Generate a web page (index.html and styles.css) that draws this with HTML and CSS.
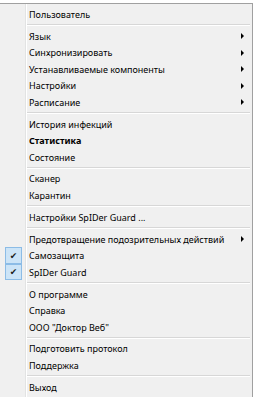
FILE: index.html
```html
<!DOCTYPE html>
<html>
  <head>
    <meta charset="utf-8">
    <meta name="viewport" content="width=device-width, initial-scale=1">
    <title>Dr.Web</title>
    <link rel="stylesheet" href="styles.css">
  </head>
  <body>
    <div class="menu">
      <div class="menu_item">Пользователь</div>
      <div class="menu_sep"></div>
      <div class="menu_item">Язык<span class="arrow"></span></div>
      <div class="menu_item">Синхронизировать<span class="arrow"></span></div>
      <div class="menu_item">Устанавливаемые компоненты<span class="arrow"></span></div>
      <div class="menu_item">Настройки<span class="arrow"></span></div>
      <div class="menu_item">Расписание<span class="arrow"></span></div>
      <div class="menu_sep"></div>
      <div class="menu_item">История инфекций</div>
      <div class="menu_item bold">Статистика</div>
      <div class="menu_item">Состояние</div>
      <div class="menu_sep"></div>
      <div class="menu_item">Сканер</div>
      <div class="menu_item">Карантин</div>
      <div class="menu_sep"></div>
      <div class="menu_item">Настройки SpIDer Guard ...</div>
      <div class="menu_sep"></div>
      <div class="menu_item">Предотвращение подозрительных действий<span class="arrow"></span></div>
      <div class="menu_item"><span class="check">&#10004;</span>Самозащита</div>
      <div class="menu_item"><span class="check">&#10004;</span>SpIDer Guard</div>
      <div class="menu_sep"></div>
      <div class="menu_item">О программе</div>
      <div class="menu_item">Справка</div>
      <div class="menu_item">ООО "Доктор Веб"</div>
      <div class="menu_sep"></div>
      <div class="menu_item">Подготовить протокол</div>
      <div class="menu_item">Поддержка</div>
      <div class="menu_sep"></div>
      <div class="menu_item">Выход</div>
    </div>
  </body>
</html>
```

FILE: styles.css
```css
html, body{
  margin: 0;
  padding: 0;
  background: #FFFFFF;
}
.menu{
  margin-top: 3px;
  width: 252px;
  padding: 2px 0 1px;
  background-color: #F0F0F0;
  background-image: linear-gradient(to right, transparent 25px, #E2E3E3 25px, #E2E3E3 26px, #FFFFFF 26px, #FFFFFF 27px, transparent 27px);
  border-top: 1px solid #A0A0A0;
  border-right: 1px solid #A0A0A0;
  font-family: "Noto Sans", "Open Sans", sans-serif;
  font-size: 9px;
  color: #000000;
}
.menu_item{
  position: relative;
  display: flex;
  align-items: center;
  height: 16.5px;
  padding-left: 29px;
  padding-right: 8px;
  white-space: nowrap;
}
.bold{
  font-weight: bold;
}
.arrow{
  margin-left: auto;
  width: 0;
  height: 0;
  border-left: 3px solid #000000;
  border-top: 3px solid transparent;
  border-bottom: 3px solid transparent;
}
.check{
  position: absolute;
  left: 5px;
  top: 0;
  width: 15px;
  height: 14.5px;
  border: 1px solid #8CBCE6;
  background: #CCE4F7;
  display: flex;
  align-items: center;
  justify-content: center;
  font-family: "DejaVu Sans", sans-serif;
  font-size: 9px;
  color: #1C1C1C;
}
.menu_sep{
  height: 1px;
  margin: 1.7px 2px 1.7px 27px;
  background: #D7D7D7;
  border-bottom: 1px solid #FFFFFF;
}
```
